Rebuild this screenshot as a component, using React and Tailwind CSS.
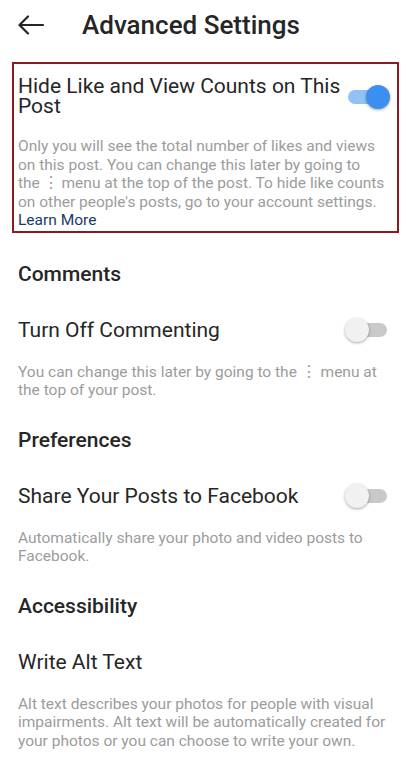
import { useState } from "react";

function Toggle({ on, onChange }) {
  return (
    <button
      onClick={onChange}
      className="relative w-[40px] h-[14px] shrink-0 rounded-full"
    >
      <span
        className={`absolute inset-0 rounded-full ${on ? "bg-[#90c3f4]" : "bg-[#c9c9c9]"}`}
      />
      <span
        className={`absolute top-[-5px] w-[24px] h-[24px] rounded-full shadow-[0_1px_3px_rgba(0,0,0,0.35)] ${
          on ? "left-[18px] bg-[#3a8ff0]" : "left-[-2px] bg-[#f1f1f1]"
        }`}
      />
    </button>
  );
}

function Section({ title, label, desc, toggle, on, onToggle }) {
  return (
    <div className="px-[18px]">
      <h2 className="text-[21px] leading-[24px] font-medium text-[#262626]">{title}</h2>
      <div className="mt-[32px] flex items-center justify-between pr-[5px]">
        <span className="text-[21px] leading-[24px] text-[#262626]">{label}</span>
        {toggle && <Toggle on={on} onChange={onToggle} />}
      </div>
      <p className="mt-[21px] text-[15.5px] leading-[18.5px] text-[#9c9c9c]">{desc}</p>
    </div>
  );
}

export default function App() {
  const [hideLikes, setHideLikes] = useState(true);
  const [comments, setComments] = useState(false);
  const [facebook, setFacebook] = useState(false);

  return (
    <div className="w-[410px] min-h-[769px] bg-white font-['Roboto',sans-serif]">
      {/* header */}
      <div className="h-[50px] flex items-center pl-[18px]">
        <svg width="26" height="20" viewBox="0 0 26 20" fill="none" stroke="#262626" strokeWidth="2.2" strokeLinecap="round" strokeLinejoin="round">
          <path d="M25 10H2M10 1.5L1.5 10L10 18.5" />
        </svg>
        <h1 className="ml-[38px] text-[26px] font-medium text-[#262626]">Advanced Settings</h1>
      </div>

      {/* highlighted option */}
      <div className="mt-[12px] ml-[12px] mr-[11px] border-2 border-[#8b1a22] pl-[4px] pr-[3px] pt-[12px] pb-[1px]">
        <div className="flex items-start justify-between">
          <span className="text-[21px] leading-[20px] text-[#262626] w-[325px]">
            Hide Like and View Counts on This Post
          </span>
          <div className="mt-[11px] mr-[6px]">
            <Toggle on={hideLikes} onChange={() => setHideLikes(!hideLikes)} />
          </div>
        </div>
        <p className="mt-[21px] text-[15.5px] leading-[18.5px] text-[#9c9c9c]">
          Only you will see the total number of likes and views on this post. You can change this later by going to
          <br />
          the <span className="mx-[-1px]">⋮</span> menu at the top of the post. To hide like counts
          <br />
          on other people's posts, go to your account settings.
          <a className="block text-[#1b3b66]">Learn More</a>
        </p>
      </div>

      <div className="mt-[29px] flex flex-col gap-[28px]">
        <Section
          title="Comments"
          label="Turn Off Commenting"
          desc={
            <>
              You can change this later by going to the ⋮ menu at
              <br />
              the top of your post.
            </>
          }
          toggle
          on={comments}
          onToggle={() => setComments(!comments)}
        />
        <Section
          title="Preferences"
          label="Share Your Posts to Facebook"
          desc="Automatically share your photo and video posts to Facebook."
          toggle
          on={facebook}
          onToggle={() => setFacebook(!facebook)}
        />
        <Section
          title="Accessibility"
          label="Write Alt Text"
          desc="Alt text describes your photos for people with visual impairments. Alt text will be automatically created for your photos or you can choose to write your own."
        />
      </div>
    </div>
  );
}
